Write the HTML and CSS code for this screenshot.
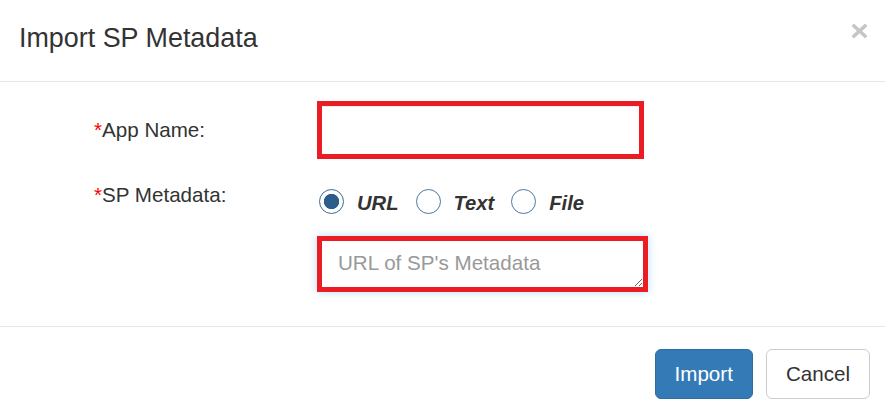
FILE: index.html
```html
<!DOCTYPE html>
<html lang="en">
<head>
<meta charset="utf-8">
<title>Import SP Metadata</title>
<link rel="stylesheet" href="styles.css">
</head>
<body>
<div class="modal">
  <div class="modal-header">
    <h4 class="modal-title">Import SP Metadata</h4>
    <button class="close" type="button" aria-label="Close">
      <svg width="15" height="14" viewBox="0 0 15 14"><path d="M2 2 L13 12 M13 2 L2 12" stroke="#c6c6c6" stroke-width="3.6" stroke-linecap="square"/></svg>
    </button>
  </div>
  <div class="modal-body">
    <div class="form-row row-app">
      <label class="control-label label-app"><span class="req">*</span>App Name:</label>
      <input class="form-control input-app" type="text">
    </div>
    <div class="form-row row-meta">
      <label class="control-label label-meta"><span class="req">*</span>SP Metadata:</label>
      <div class="meta-col">
        <div class="radio-row">
          <label class="opt"><input class="radio" type="radio" name="src" checked><span class="opt-text">URL</span></label>
          <label class="opt"><input class="radio" type="radio" name="src"><span class="opt-text">Text</span></label>
          <label class="opt"><input class="radio" type="radio" name="src"><span class="opt-text">File</span></label>
        </div>
        <textarea class="form-control input-url" placeholder="URL of SP's Metadata"></textarea>
      </div>
    </div>
  </div>
  <div class="modal-footer">
    <button class="btn btn-primary" type="button">Import</button>
    <button class="btn btn-default" type="button">Cancel</button>
  </div>
</div>
</body>
</html>
```

FILE: styles.css
```css
html, body {
  margin: 0;
  padding: 0;
  background: #ffffff;
}

body {
  font-family: "Liberation Sans", Arial, sans-serif;
  color: #333333;
  font-size: 20.6px;
}

.modal {
  width: 885px;
  height: 416px;
  overflow: hidden;
}

.modal-header {
  height: 61px;
  padding: 20px 18px 0 19px;
  border-bottom: 1px solid #e5e5e5;
  display: flex;
  justify-content: space-between;
  align-items: flex-start;
}

.modal-title {
  margin: 0;
  font-size: 26.9px;
  font-weight: normal;
  line-height: 37px;
  color: #333333;
}

.close {
  margin: 4px 0 0 0;
  padding: 0;
  border: 0;
  background: transparent;
  width: 15px;
  height: 14px;
  display: block;
}

.close svg {
  display: block;
}

.modal-body {
  padding: 19px 0 34px 94px;
  height: 191px;
}

.form-row {
  display: flex;
  align-items: flex-start;
}

.row-meta {
  margin-top: 21px;
}

.control-label {
  width: 223px;
  line-height: 28px;
  font-size: 20.6px;
  color: #333333;
}

.label-app {
  padding-top: 15px;
}

.label-meta {
  padding-top: 1px;
}

.req {
  color: #ff0000;
}

.form-control {
  box-sizing: border-box;
  border: 5px solid #ec1c24;
  background: #ffffff;
  font-family: "Liberation Sans", Arial, sans-serif;
  font-size: 20.6px;
  color: #555555;
  margin: 0;
  outline: none;
}

.input-app {
  width: 327px;
  height: 58px;
  padding: 0 16px;
  box-shadow: inset 0 1px 1px rgba(0, 0, 0, 0.075);
}

.meta-col {
  display: flex;
  flex-direction: column;
}

.radio-row {
  display: flex;
  gap: 17px;
  margin-top: 9px;
  padding-left: 2px;
  height: 25px;
}

.opt {
  display: flex;
  align-items: flex-start;
  gap: 13px;
}

.radio {
  -webkit-appearance: none;
  appearance: none;
  width: 25px;
  height: 25px;
  margin: 0;
  border: 1.5px solid #4b79a3;
  border-radius: 50%;
  background: #ffffff;
  box-sizing: border-box;
}

.radio:checked {
  border-color: #3c6b96;
  background: radial-gradient(circle, #2c5d8c 0, #2c5d8c 7.3px, #ffffff 8px);
}

.opt-text {
  font-weight: bold;
  font-style: italic;
  font-size: 20.2px;
  line-height: 25px;
  margin-top: 2px;
  color: #333333;
}

.input-url {
  width: 331px;
  height: 56px;
  margin-top: 22px;
  padding: 8px 16px 0;
  line-height: 28px;
  resize: vertical;
  box-shadow: 0 0 8px rgba(102, 175, 233, 0.45);
}

.input-url::placeholder {
  color: #999999;
}

.modal-footer {
  border-top: 1px solid #e5e5e5;
  padding: 22px 15px 0 0;
  display: flex;
  justify-content: flex-end;
  gap: 13px;
}

.btn {
  height: 50px;
  box-sizing: border-box;
  border-radius: 6px;
  font-family: "Liberation Sans", Arial, sans-serif;
  font-size: 20.6px;
  line-height: 48px;
  margin: 0;
}

.btn-primary {
  background: #337ab7;
  border: 1px solid #2e6da4;
  color: #ffffff;
  padding: 0 19px;
}

.btn-default {
  background: #ffffff;
  border: 1px solid #cccccc;
  color: #333333;
  padding: 0 19px;
}
```
